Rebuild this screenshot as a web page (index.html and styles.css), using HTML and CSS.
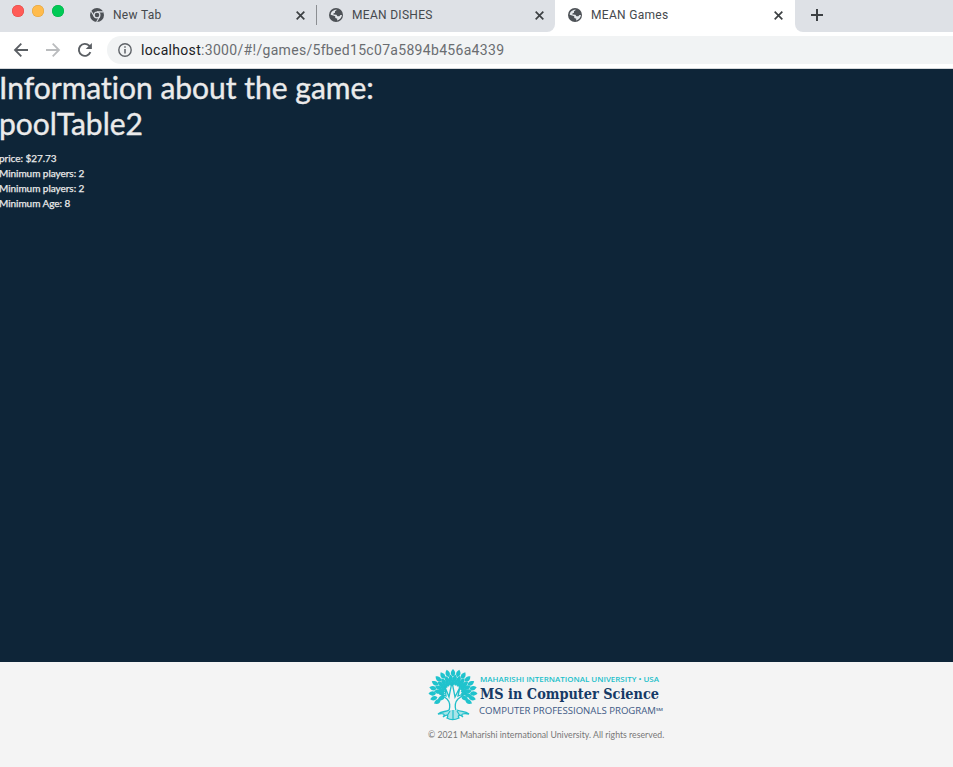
FILE: index.html
```html
<!DOCTYPE html>
<html lang="en">
<head>
<meta charset="utf-8">
<title>MEAN Games</title>
<link rel="stylesheet" href="styles.css">
</head>
<body>
<svg width="0" height="0" class="defs">
  <defs>
    <symbol id="globe" viewBox="0 0 14 14"><circle cx="7" cy="7" r="7" fill="#4d5156"/><path d="M8.1 1.8 6 3.3v1.5l-1.6.6v1.2l3 .1 1 1.6 2-.1 1-1.3 1.6.2c-.2 2.6-2.3 4.9-5 5.3l.3-1.6-2-.9-.1-1.6-2.1-.9-2.4-.7C1.7 4 4.4 1.4 8.1 1.8z" fill="#e4e7eb"/></symbol>
    <symbol id="close" viewBox="0 0 8 8"><path d="m.6.6 6.8 6.8m0-6.8L.6 7.4" stroke="#3c4043" stroke-width="1.5"/></symbol>
  </defs>
</svg>
<header class="browser">
  <div class="tabs">
    <div class="lights"><i class="red"></i><i class="amber"></i><i class="green"></i></div>
    <div class="tab first">
      <svg class="icon" viewBox="0 0 14 14"><circle cx="7" cy="7" r="7" fill="#4d5156"/><circle cx="7" cy="7" r="2.9" fill="#4d5156" stroke="#dee1e6" stroke-width="1.2"/><path d="M7 3.9h6.3M4.4 8.6 1.2 3.2M9.6 8.6l-3 5.3" stroke="#dee1e6" stroke-width="1.1"/></svg>
      <span>New Tab</span><svg class="close"><use href="#close"/></svg>
    </div>
    <div class="tab second"><svg class="icon"><use href="#globe"/></svg><span>MEAN DISHES</span><svg class="close"><use href="#close"/></svg></div>
    <div class="tab active"><svg class="icon"><use href="#globe"/></svg><span>MEAN Games</span><svg class="close"><use href="#close"/></svg></div>
    <div class="rest"><svg width="12" height="12" viewBox="0 0 12 12"><path d="M6 0v12M0 6h12" stroke="#3c4043" stroke-width="2"/></svg></div>
  </div>
  <div class="toolbar">
    <svg class="nav" viewBox="0 0 16 16"><path d="M15 8H2m6.3-6.3L2 8l6.3 6.3" fill="none" stroke="#5a5e63" stroke-width="1.8"/></svg>
    <svg class="nav" viewBox="0 0 16 16"><path d="M1 8h13M7.7 1.7 14 8l-6.3 6.3" fill="none" stroke="#babcbe" stroke-width="1.8"/></svg>
    <svg class="nav" viewBox="0 0 16 16"><path d="M13.4 10.2A6 6 0 1 1 12.2 3.7L13.5 5" fill="none" stroke="#5a5e63" stroke-width="1.9"/><path d="M14.9.9v6.2H8.7z" fill="#5a5e63"/></svg>
    <div class="address">
      <svg width="14" height="14" viewBox="0 0 14 14"><circle cx="7" cy="7" r="6.2" fill="none" stroke="#5f6368" stroke-width="1.4"/><path d="M7 6v4.5M7 3.3v1.5" stroke="#5f6368" stroke-width="1.5"/></svg>
      <span class="url"><b>localhost</b>:3000/#!/games/5fbed15c07a5894b456a4339</span>
    </div>
  </div>
</header>
<main>
  <h1>Information about the game:<br>poolTable2</h1>
  <p>price: $27.73</p>
  <p>Minimum players: 2</p>
  <p>Minimum players: 2</p>
  <p>Minimum Age: 8</p>
</main>
<footer>
  <svg class="logo" width="236" height="54" viewBox="0 0 236 54">
    <defs>
      <path id="leaf" d="M0 0C-3.2-2-2.6-5 0-7.5 2.600-5 3.200-2 0 0z"/>
      <g id="spray"><use href="#leaf" y="-17"/><use href="#leaf" transform="rotate(7) translate(0 -12) scale(.95)"/><use href="#leaf" transform="translate(0 -8) scale(.9)"/></g>
    </defs>
    <g transform="translate(25 25.5)" fill="#20c3cd">
      <use href="#spray"/>
      <use href="#spray" transform="rotate(15)"/><use href="#spray" transform="rotate(30)"/><use href="#spray" transform="rotate(45)"/><use href="#spray" transform="rotate(60)"/><use href="#spray" transform="rotate(75)"/><use href="#spray" transform="rotate(90)"/>
      <use href="#spray" transform="rotate(-15)"/><use href="#spray" transform="rotate(-30)"/><use href="#spray" transform="rotate(-45)"/><use href="#spray" transform="rotate(-60)"/><use href="#spray" transform="rotate(-75)"/><use href="#spray" transform="rotate(-90)"/>
      <use href="#leaf" transform="rotate(104) translate(0 -16)"/><use href="#leaf" transform="rotate(-104) translate(0 -16)"/>
      <use href="#leaf" transform="rotate(118) translate(0 -14)"/><use href="#leaf" transform="rotate(-118) translate(0 -14)"/>
      <use href="#leaf" transform="rotate(112) translate(0 -9)"/><use href="#leaf" transform="rotate(-112) translate(0 -9)"/>
    </g>
    <path d="M21 43c1.500-5 1-9-2-12l-8-6 7 3-1-9 4 10 3-15 3 15 5-10-2 9 8-3-8 6c-3 3-3.500 7-2 12z" fill="#f4f4f4" stroke="#20bfca" stroke-width="1.300"/>
    <path d="M21 42c-3 2-7 1-11 4 5-1 8 0 5 3 4-3 6-2 4 1 3 2 8 2 12 0-2-3 1-4 4-1-3-3 0-4 6-3-4-3-8-2-12-4" fill="#a9e4e8" stroke="#20bfca" stroke-width="1.300"/>
    <path d="m22 43-3 5m6-6v9m4-8 3 5" fill="none" stroke="#20bfca" stroke-width="1.200"/>
    <text class="uni" x="52" y="14" textLength="179" lengthAdjust="spacingAndGlyphs">MAHARISHI INTERNATIONAL UNIVERSITY • USA</text>
    <text class="degree" x="52" y="31" textLength="179" lengthAdjust="spacingAndGlyphs">MS in Computer Science</text>
    <text class="program" x="51" y="46" textLength="177" lengthAdjust="spacingAndGlyphs">COMPUTER PROFESSIONALS PROGRAM</text>
    <text class="mark" x="228" y="43" textLength="7" lengthAdjust="spacingAndGlyphs">SM</text>
  </svg>
  <small>© 2021 Maharishi international University. All rights reserved.</small>
</footer>
</body>
</html>
```
FILE: styles.css
```css
* { box-sizing: border-box; }
body { margin: 0; height: 767px; overflow: hidden; display: flex; flex-direction: column; background: #0e2538; color: #ebebeb; font-family: Lato, sans-serif; font-variant-ligatures: none; }
.defs { position: absolute; }
.browser { height: 69px; flex: none; background: #fff; border-bottom: 1px solid #d5d7da; font-family: Roboto, sans-serif; }
.tabs { height: 32px; display: flex; background: #fff; }
.lights { width: 78px; background: #dee1e6; padding: 5px 0 0 12px; display: flex; gap: 8px; }
.lights i { width: 12px; height: 12px; border-radius: 50%; }
.red { background: #ff5b57; box-shadow: inset 0 0 0 .5px #df4744; }
.amber { background: #ffbb4c; box-shadow: inset 0 0 0 .5px #dea13d; }
.green { background: #00ca56; box-shadow: inset 0 0 0 .5px #00ae45; }
.tab { display: flex; align-items: center; height: 32px; padding: 0 12px 2px 12px; font-size: 12px; letter-spacing: .3px; color: #45494d; background: #dee1e6; }
.tab span { flex: 1; margin-left: 9px; }
.first { width: 239px; position: relative; }
.first::after { content: ""; position: absolute; right: 0; top: 5px; width: 1px; height: 20px; background: #8b8e92; }
.second { width: 238px; padding-right: 11px; border-bottom-right-radius: 8px; }
.active { width: 240px; padding-left: 13px; background: #fff; }
.icon { width: 14px; height: 14px; }
.close { width: 9px; height: 9px; }
.rest { flex: 1; background: #dee1e6; border-bottom-left-radius: 8px; padding: 9px 16px; }
.rest svg { display: block; }
.toolbar { height: 36px; display: flex; align-items: center; padding-left: 13px; gap: 16px; }
.nav { width: 16px; height: 16px; flex: none; }
.address { flex: 1; height: 28px; margin-left: -2px; padding-left: 11px; display: flex; align-items: center; gap: 9px; background: #f1f3f4; border-radius: 14px 0 0 14px; }
.url { font-size: 14px; color: #6a6d71; letter-spacing: .31px; white-space: nowrap; }
.url b { font-weight: 400; color: #202124; }
main { height: 593px; }
h1 { margin: 0 0 10px -1px; font-size: 30px; line-height: 36px; font-weight: 400; -webkit-text-stroke: .4px #ebebeb; }
p { margin: 0 0 0 -1px; font-size: 10px; line-height: 15px; letter-spacing: -.04px; -webkit-text-stroke: .25px #ebebeb; }
footer { height: 105px; background: #f4f4f4; padding: 6px 0 0 428px; color: #777; }
.logo { display: block; }
small { display: block; margin-top: 7px; font-size: 8.7px; letter-spacing: .02px; line-height: 12px; white-space: nowrap; }
.uni { font: 600 7.5px "Open Sans", sans-serif; fill: #20bfca; }
.degree { font: 700 14px "DejaVu Serif Condensed", "DejaVu Serif", serif; fill: #163a66; }
.program { font: 500 9.5px "Open Sans", sans-serif; fill: #405984; }
.mark { font: 600 4px "Open Sans", sans-serif; fill: #405984; }
```
